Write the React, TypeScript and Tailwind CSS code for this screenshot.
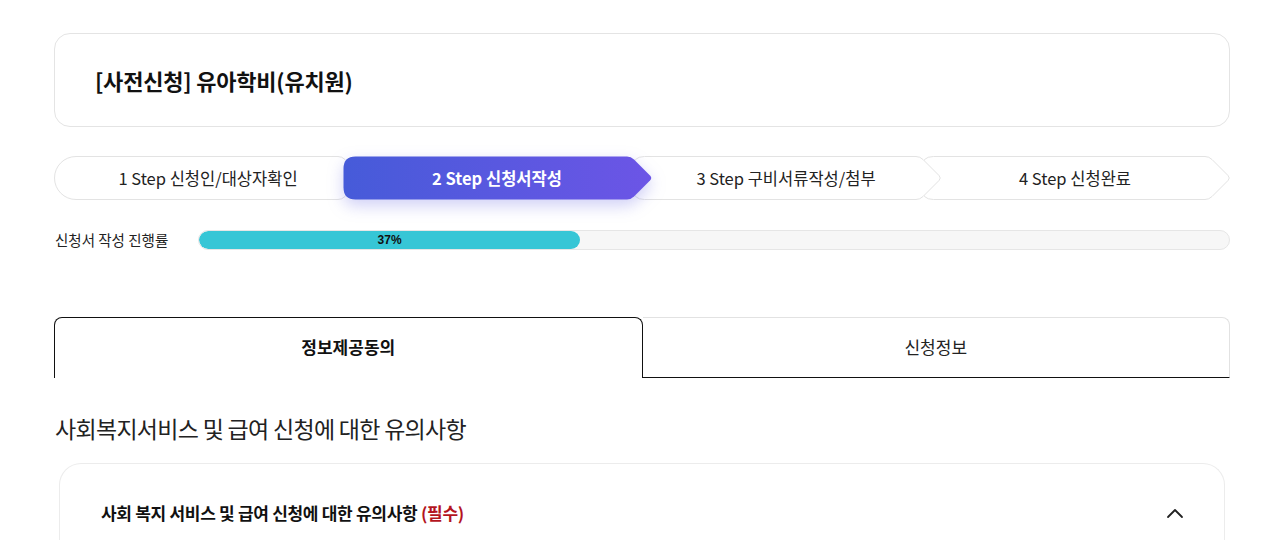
import React from "react";

const FONT = { fontFamily: '"Noto Sans CJK KR", "Noto Sans", sans-serif' };

type StepProps = {
  label: string;
  active?: boolean;
  first?: boolean;
  z: string;
  ml: string;
};

function stepPath(W: number, H: number, first: boolean) {
  const A = 22;
  const r = first ? H / 2 - 0.5 : 12;
  const t = 0.5;
  const b = H - 0.5;
  const m = H / 2;
  return [
    `M ${r + 0.5} ${t}`,
    `L ${W - A - 4} ${t}`,
    `Q ${W - A} ${t} ${W - A + 3} ${t + 3}`,
    `L ${W - 3} ${m - 2.5}`,
    `Q ${W - 0.5} ${m} ${W - 3} ${m + 2.5}`,
    `L ${W - A + 3} ${b - 3}`,
    `Q ${W - A} ${b} ${W - A - 4} ${b}`,
    `L ${r + 0.5} ${b}`,
    first
      ? `A ${r} ${r} 0 0 1 ${r + 0.5} ${t}`
      : `Q 0.5 ${b} 0.5 ${b - r} L 0.5 ${t + r} Q 0.5 ${t} ${r + 0.5} ${t}`,
    "Z",
  ].join(" ");
}

function Step({ label, active, first, z, ml }: StepProps) {
  const W = 310;
  const H = 44;
  return (
    <div className={`relative h-[44px] w-[310px] shrink-0 ${z} ${ml}`}>
      <svg
        width={W}
        height={H}
        viewBox={`0 0 ${W} ${H}`}
        className={`absolute inset-0 overflow-visible ${
          active ? "drop-shadow-[0_6px_8px_rgba(84,84,222,0.28)]" : ""
        }`}
      >
        <defs>
          <linearGradient id="stepgrad" x1="0" y1="0" x2="1" y2="0">
            <stop offset="0" stopColor="#465bd9" />
            <stop offset="1" stopColor="#6c55e6" />
          </linearGradient>
        </defs>
        <path
          d={stepPath(W, H, !!first)}
          fill={active ? "url(#stepgrad)" : "#ffffff"}
          stroke={active ? "none" : "#e3e3e3"}
          strokeWidth={1}
          strokeLinejoin="round"
        />
      </svg>
      <div
        className={`relative flex h-full items-center justify-center pr-[4px] pl-[2px] text-[16.5px] ${
          active ? "font-bold text-white" : "text-[#222]"
        }`}
      >
        {label}
      </div>
    </div>
  );
}

export default function App() {
  return (
    <div className="min-h-[540px] w-full bg-white" style={FONT}>
      <div className="ml-[54px] w-[1176px] pt-[33px]">
        {/* Title card */}
        <div className="flex h-[94px] items-center rounded-[16px] border border-[#e4e4e4] px-[40px]">
          <h1 className="text-[22px] font-semibold tracking-[-0.2px] text-[#111]">
            [사전신청] 유아학비(유치원)
          </h1>
        </div>

        {/* Steps */}
        <div className="mt-[29px] flex">
          <Step label="1 Step 신청인/대상자확인" first z="z-10" ml="" />
          <Step label="2 Step 신청서작성" active z="z-30" ml="-ml-[21px]" />
          <Step label="3 Step 구비서류작성/첨부" z="z-20" ml="-ml-[21px]" />
          <Step label="4 Step 신청완료" z="z-10" ml="-ml-[21px]" />
        </div>

        {/* Progress */}
        <div className="mt-[29px] flex items-center">
          <div className="w-[144px] pl-[1px] text-[14.5px] text-[#222]">
            신청서 작성 진행률
          </div>
          <div className="h-[20px] flex-1 overflow-hidden rounded-full border border-[#e6e6e6] bg-[#f7f7f7]">
            <div
              className="flex h-full items-center justify-center rounded-full bg-[#36c6d6] text-[12px] font-semibold text-[#111]"
              style={{ width: "37%", fontFamily: '"Liberation Sans", Arial, sans-serif' }}
            >
              37%
            </div>
          </div>
        </div>

        {/* Tabs */}
        <div className="mt-[66px] flex h-[61px]">
          <div className="flex flex-1 items-center justify-center rounded-t-[8px] border-[1.5px] border-b-0 border-[#111] bg-white pb-[2px] text-[17px] font-bold text-[#111]">
            정보제공동의
          </div>
          <div className="flex flex-1 items-center justify-center rounded-tr-[8px] border-t border-r border-[#e2e2e2] border-b-[1.5px] border-b-[#111] pb-[2px] text-[17px] text-[#222]">
            신청정보
          </div>
        </div>

        {/* Section heading */}
        <h2 className="mt-[34px] pl-[1px] text-[23px] leading-[32px] tracking-[-0.7px] text-[#222]">
          사회복지서비스 및 급여 신청에 대한 유의사항
        </h2>

        {/* Accordion card */}
        <div className="mx-[5px] mt-[19px] h-[120px] rounded-t-[22px] border border-b-0 border-[#ececec] bg-white">
          <div className="flex h-[98px] items-center justify-between pr-[40px] pl-[41px]">
            <div className="text-[17px] font-bold tracking-[-0.3px] text-[#111]">
              사회 복지 서비스 및 급여 신청에 대한 유의사항{" "}
              <span className="text-[#b4141e]">(필수)</span>
            </div>
            <svg width="18" height="12" viewBox="0 0 18 12" fill="none">
              <path
                d="M2 10 L9 3 L16 10"
                stroke="#222"
                strokeWidth="1.8"
                strokeLinecap="round"
                strokeLinejoin="round"
              />
            </svg>
          </div>
        </div>
      </div>
    </div>
  );
}
